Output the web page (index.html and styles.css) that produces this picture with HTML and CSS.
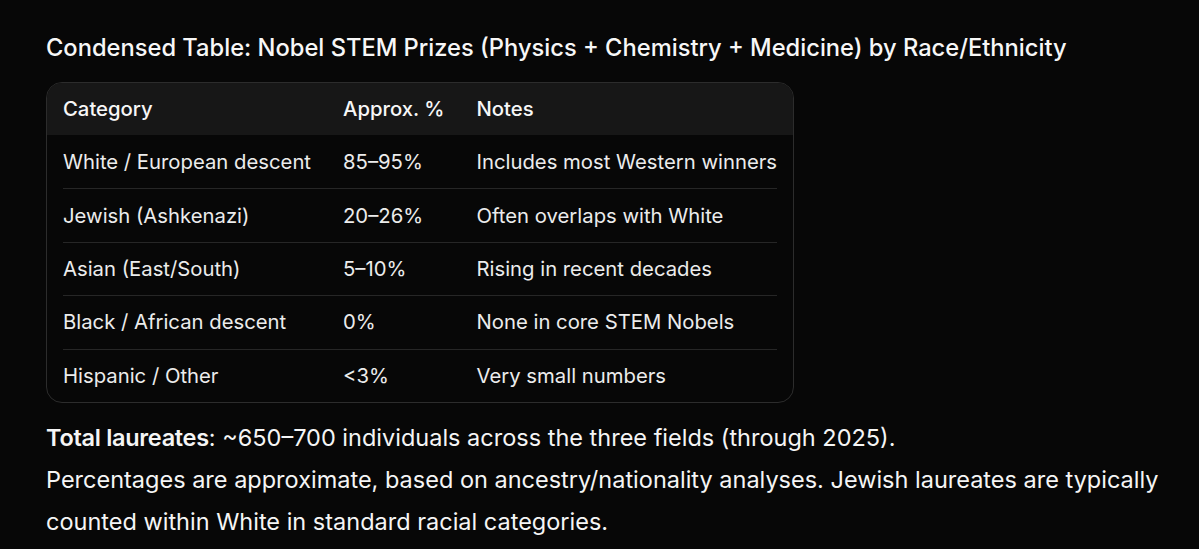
FILE: index.html
```html
<!DOCTYPE html>
<html>
<head>
<meta charset="utf-8">
<link rel="stylesheet" href="styles.css">
</head>
<body>
<main class="content">
  <h3 class="title">Condensed Table: Nobel STEM Prizes (Physics + Chemistry + Medicine) by Race/Ethnicity</h3>
  <div class="table-wrap">
    <table class="table">
      <thead>
        <tr><th class="c1">Category</th><th class="c2">Approx. %</th><th class="c3">Notes</th></tr>
      </thead>
      <tbody>
        <tr><td>White / European descent</td><td>85–95%</td><td>Includes most Western winners</td></tr>
        <tr><td>Jewish (Ashkenazi)</td><td>20–26%</td><td>Often overlaps with White</td></tr>
        <tr><td>Asian (East/South)</td><td>5–10%</td><td>Rising in recent decades</td></tr>
        <tr><td>Black / African descent</td><td>0%</td><td>None in core STEM Nobels</td></tr>
        <tr><td>Hispanic / Other</td><td>&lt;3%</td><td>Very small numbers</td></tr>
      </tbody>
    </table>
  </div>
  <p class="note"><strong>Total laureates</strong>: ~650–700 individuals across the three fields (through 2025).<br>Percentages are approximate, based on ancestry/nationality analyses. Jewish laureates are typically counted within White in standard racial categories.</p>
</main>
</body>
</html>
```

FILE: styles.css
```css
html, body {
  margin: 0;
  padding: 0;
  background: #070707;
}
body {
  font-family: Inter, "Noto Sans", sans-serif;
  color: #f5f5f5;
}
.content {
  padding: 33px 30px 0 46px;
}
.title {
  margin: 0 0 19px;
  font-size: 23.7px;
  line-height: 30px;
  font-weight: 500;
  color: #f7f7f7;
}
.table-wrap {
  width: fit-content;
  border: 1px solid #2c2c2c;
  border-radius: 16px;
  overflow: hidden;
}
.table {
  border-collapse: separate;
  border-spacing: 0;
  font-size: 20.3px;
  line-height: 26px;
}
.table th {
  background: #171717;
  font-weight: 500;
  text-align: left;
  height: 52px;
  padding: 0 16px;
  color: #f7f7f7;
}
.table td {
  height: 53.4px;
  box-sizing: border-box;
  padding: 0 16px;
  color: #ececec;
  font-weight: 400;
  position: relative;
}
.table tbody tr + tr td {
  border-top: 1px solid #262626;
}
.table tbody tr + tr td:first-child,
.table tbody tr + tr td:last-child {
  border-top: 1px solid transparent;
}
.table tbody tr + tr td:first-child::before,
.table tbody tr + tr td:last-child::before {
  content: "";
  position: absolute;
  top: -1px;
  height: 1px;
  background: #262626;
}
.table tbody tr + tr td:first-child::before { left: 16px; right: 0; }
.table tbody tr + tr td:last-child::before { left: 0; right: 16px; }
.note {
  margin: 14px 0 0;
  font-size: 23.5px;
  line-height: 42px;
  color: #f5f5f5;
}
.note strong {
  font-weight: 600;
  letter-spacing: -0.3px;
}
```
